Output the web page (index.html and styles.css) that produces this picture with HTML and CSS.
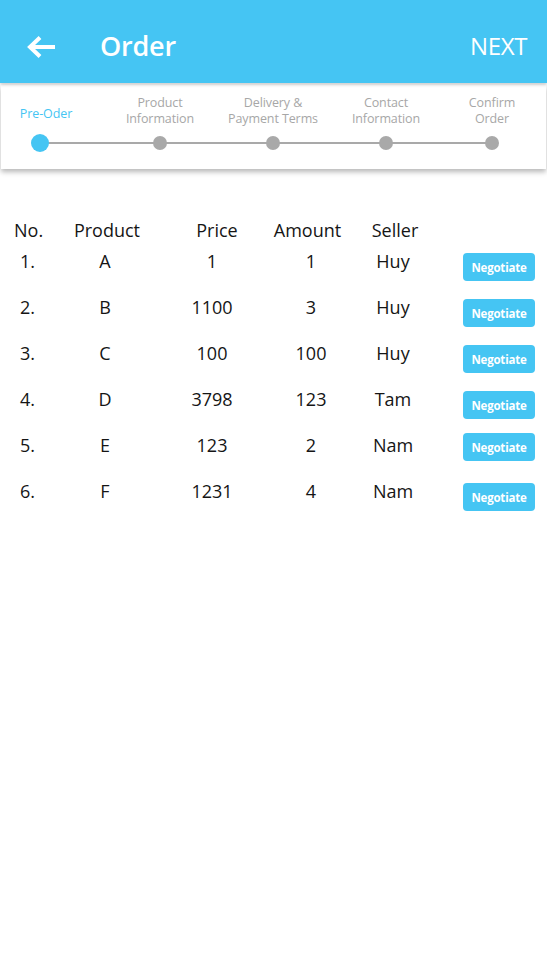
FILE: index.html
```html
<!DOCTYPE html>
<html lang="en">
<head>
<meta charset="utf-8">
<title>Order</title>
<link rel="stylesheet" href="styles.css">
</head>
<body>
<div class="app">
  <header class="topbar">
    <svg class="back" width="30" height="24" viewBox="0 0 30 24" aria-hidden="true">
      <path d="M29 12H4M14 2.5L4 12L14 21.5" fill="none" stroke="#fff" stroke-width="4" stroke-linecap="butt" stroke-linejoin="miter"/>
    </svg>
    <h1 class="title">Order</h1>
    <span class="next">NEXT</span>
  </header>

  <section class="stepper">
    <div class="steps labels">
      <span class="step-label active first">Pre-Oder</span>
      <span class="step-label">Product<br>Information</span>
      <span class="step-label">Delivery &amp;<br>Payment Terms</span>
      <span class="step-label">Contact<br>Information</span>
      <span class="step-label">Confirm<br>Order</span>
    </div>
    <div class="steps dots">
      <span class="dot-cell"><span class="dot active"></span></span>
      <span class="dot-cell"><span class="dot"></span></span>
      <span class="dot-cell"><span class="dot"></span></span>
      <span class="dot-cell"><span class="dot"></span></span>
      <span class="dot-cell"><span class="dot"></span></span>
    </div>
  </section>

  <section class="table">
    <div class="thead">
      <span class="th no">No.</span>
      <span class="th">Product</span>
      <span class="th">Price</span>
      <span class="th">Amount</span>
      <span class="th">Seller</span>
    </div>
    <div class="row"><span class="no">1.</span><span>A</span><span>1</span><span>1</span><span>Huy</span><button class="btn">Negotiate</button></div>
    <div class="row"><span class="no">2.</span><span>B</span><span>1100</span><span>3</span><span>Huy</span><button class="btn">Negotiate</button></div>
    <div class="row"><span class="no">3.</span><span>C</span><span>100</span><span>100</span><span>Huy</span><button class="btn">Negotiate</button></div>
    <div class="row"><span class="no">4.</span><span>D</span><span>3798</span><span>123</span><span>Tam</span><button class="btn">Negotiate</button></div>
    <div class="row"><span class="no">5.</span><span>E</span><span>123</span><span>2</span><span>Nam</span><button class="btn btn-high">Negotiate</button></div>
    <div class="row"><span class="no">6.</span><span>F</span><span>1231</span><span>4</span><span>Nam</span><button class="btn">Negotiate</button></div>
  </section>
</div>
</body>
</html>
```
FILE: styles.css
```css
* { box-sizing: border-box; }
html, body { margin: 0; padding: 0; background: #fff; }
body { font-family: "Open Sans", "Noto Sans", sans-serif; color: #151515; }

.app { width: 547px; min-height: 960px; background: #fff; }

.topbar {
  height: 83px;
  background: #45c5f3;
  display: flex;
  align-items: center;
  padding: 0 20px 0 26px;
  box-shadow: 0 2px 3px rgba(0,0,0,0.18);
  position: relative;
  z-index: 2;
}
.back { display: block; margin-top: 10px; }
.title {
  margin: 0 0 0 44px;
  font-size: 27px;
  font-weight: 600;
  color: #fff;
  letter-spacing: -0.2px;
  margin-top: 8px;
}
.next {
  margin-left: auto;
  color: #fff;
  font-size: 24px;
  font-weight: 400;
  margin-top: 8px;
  letter-spacing: -0.4px;
}

.stepper {
  margin: 2px 1px 0 1px;
  height: 84px;
  background: #fff;
  box-shadow: 0 3px 5px rgba(0,0,0,0.28);
  padding-top: 7px;
  position: relative;
  z-index: 1;
}
.steps {
  display: grid;
  grid-template-columns: 77px 164px 62px 164px 48px;
}
.labels { height: 37px; align-items: center; }
.step-label {
  min-width: 0;
  display: flex;
  justify-content: center;
  text-align: center;
  white-space: nowrap;
  font-size: 12.5px;
  line-height: 16px;
  color: #a7a7a7;
  letter-spacing: -0.1px;
}
.step-label.active { color: #45c5f3; }
.step-label.first { padding-left: 13px; margin-top: 6px; }

.dots { position: relative; height: 20px; margin-top: 4px; align-items: center; }
.dots::before {
  content: "";
  position: absolute;
  left: 38px;
  right: 54px;
  top: 9px;
  height: 2px;
  background: #a9a9a9;
}
.dot-cell { display: flex; justify-content: center; align-items: center; min-width: 0; position: relative; }
.dot { width: 14px; height: 14px; border-radius: 50%; background: #a9a9a9; display: block; }
.dot.active { width: 18px; height: 18px; background: #45c5f3; }

.table { padding-top: 49px; }
.thead {
  display: grid;
  grid-template-columns: 60px 94px 126px 55px 120px;
  font-size: 18px;
  line-height: 24px;
  height: 26px;
}
.th { display: flex; justify-content: center; white-space: nowrap; min-width: 0; }
.th.no { justify-content: flex-start; padding-left: 14px; }

.row {
  display: grid;
  grid-template-columns: 60px 90px 124px 74px 90px 109px;
  align-items: start;
  height: 46px;
  font-size: 18px;
  line-height: 24px;
}
.thead + .row { margin-top: 5px; }
.row > span { display: flex; justify-content: center; white-space: nowrap; min-width: 0; }
.row > span.no { justify-content: flex-start; padding-left: 20px; }

.btn {
  margin: 4px 0 0 25px;
  width: 72px;
  height: 28px;
  border: 0;
  border-radius: 4px;
  background: #45c5f3;
  color: #fff;
  font-family: "Open Sans", "Noto Sans", sans-serif;
  font-weight: 700;
  font-size: 11.5px;
  padding: 0;
  letter-spacing: -0.2px;
}
.btn-high { margin-top: 0; }
```
